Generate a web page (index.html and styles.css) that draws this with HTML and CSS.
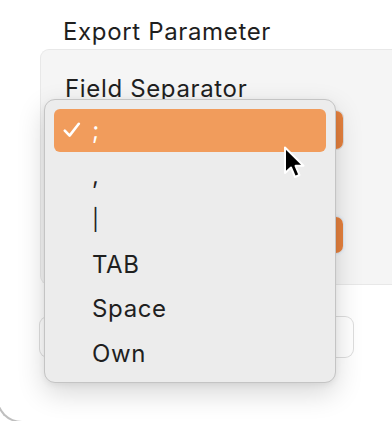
FILE: index.html
```html
<!DOCTYPE html>
<html>
<head>
<meta charset="utf-8">
<link rel="stylesheet" href="styles.css">
</head>
<body>
<div class="window">
  <div class="title">Export Parameter</div>
  <div class="panel">
    <div class="label">Field Separator</div>
    <div class="popup popup-one"><span class="arrow"></span></div>
    <div class="popup popup-two"><span class="arrow"></span></div>
  </div>
  <div class="button-row"><div class="push"></div></div>

  <div class="menu">
    <div class="item selected">
      <svg class="check" width="18" height="16" viewBox="0 0 18 16"><path d="M1.8 8.6 L6.6 13.6 L15.8 1.8" fill="none" stroke="#fff" stroke-width="2.6" stroke-linecap="round" stroke-linejoin="round"/></svg>
      <span class="text">;</span>
    </div>
    <div class="item"><span class="text">,</span></div>
    <div class="item"><span class="text pipe">|</span></div>
    <div class="item"><span class="text">TAB</span></div>
    <div class="item"><span class="text">Space</span></div>
    <div class="item"><span class="text">Own</span></div>
  </div>

  <svg class="cursor" width="22" height="36" viewBox="0 0 22 36">
    <path d="M2 1.5 L2 27 L8 21.5 L12 31 L16.5 29 L12.5 19.8 L20.5 19.8 Z" fill="#000" stroke="#fff" stroke-width="2" stroke-linejoin="round"/>
  </svg>
  <div class="corner"></div>
</div>
</body>
</html>
```
FILE: styles.css
```css
html, body {
  margin: 0;
  padding: 0;
  background: #ffffff;
}
body {
  width: 392px;
  height: 421px;
  overflow: hidden;
  font-family: Inter, "Noto Sans", "Liberation Sans", sans-serif;
  color: #1f1f1f;
}
.window {
  position: relative;
  width: 392px;
  height: 421px;
  overflow: hidden;
}
.title {
  font-size: 24px;
  line-height: 28px;
  padding: 18px 0 0 63px;
  height: 31px;
  letter-spacing: 0.65px;
}
.panel {
  margin-left: 40px;
  height: 236px;
  background: #f5f5f5;
  border: 1px solid #e8e8e8;
  border-right: none;
  border-radius: 9px 0 0 9px;
  box-sizing: border-box;
  padding: 26px 0 0 24px;
  display: flex;
  flex-direction: column;
}
.label {
  font-size: 24px;
  line-height: 26px;
  letter-spacing: 0.65px;
}
.popup {
  width: 278px;
  height: 38px;
  background: #fff;
  border-radius: 7px;
  box-shadow: 0 0 0 1px #dcdcdc;
  position: relative;
}
.popup-one { margin-top: 9px; }
.popup-two {
  margin-top: 68px;
  height: 36px;
  box-shadow: 0 0 0 1px #dfe6ee, 0 0 0 3px #eef2f6;
}
.arrow {
  position: absolute;
  right: 0;
  top: 0;
  bottom: 0;
  width: 30px;
  background: #e5813e;
  border-radius: 0 7px 7px 0;
}
.button-row {
  padding: 32px 0 0 40px;
}
.push {
  width: 313px;
  height: 40px;
  background: #fff;
  border-radius: 8px;
  box-shadow: 0 0 0 1px #dedede;
}
.menu {
  position: absolute;
  left: 44px;
  top: 99px;
  width: 292px;
  height: 284px;
  box-sizing: border-box;
  background: #ececec;
  border: 1px solid #c4c4c4;
  border-radius: 11px;
  padding: 9px 9px 0 9px;
  box-shadow: 0 10px 28px rgba(0,0,0,0.16), 0 2px 6px rgba(0,0,0,0.06);
}
.item {
  height: 44.5px;
  display: flex;
  align-items: center;
  padding-left: 38px;
  font-size: 24px;
  position: relative;
  border-radius: 6px;
  letter-spacing: 0.65px;
}
.item.selected {
  height: 43px;
  margin-bottom: 1.5px;
  background: #f19c5c;
  color: #fff;
}
.check {
  position: absolute;
  left: 9px;
  top: 13px;
}
.text {
  line-height: 26px;
}
.pipe {
  font-size: 21px;
  color: #222;
}
.cursor {
  position: absolute;
  left: 283px;
  top: 146px;
}
.corner {
  position: absolute;
  left: -4px;
  top: 395px;
  width: 100px;
  height: 26px;
  border-left: 2px solid #8c8c8c;
  border-bottom: 2px solid #8c8c8c;
  border-radius: 0 0 0 26px;
  opacity: 0.55;
}
```
